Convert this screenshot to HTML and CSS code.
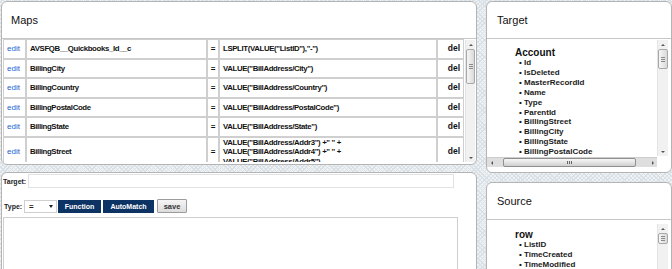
FILE: index.html
```html
<!DOCTYPE html>
<html lang="en">
<head>
    <meta charset="UTF-8">
    <meta name="viewport" content="width=device-width, initial-scale=1.0">
    <title>Field Maps</title>
    <link rel="stylesheet" href="styles.css">
</head>
<body>
    <div class="page">
        <div class="col-left">
            <section class="panel maps">
                <div class="panel-head">Maps</div>
                <div class="maps-body">
                    <div class="maps-scroll">
                        <table class="map-table">
                            <colgroup>
                                <col class="c-edit"><col class="c-field"><col class="c-eq"><col class="c-value"><col class="c-del">
                            </colgroup>
                            <tr>
                                <td class="edit">edit</td>
                                <td>AVSFQB__Quickbooks_Id__c</td>
                                <td class="eq">=</td>
                                <td class="value">LSPLIT(VALUE("ListID"),"-")</td>
                                <td class="del">del</td>
                            </tr>
                            <tr>
                                <td class="edit">edit</td>
                                <td>BillingCity</td>
                                <td class="eq">=</td>
                                <td class="value">VALUE("BillAddress/City")</td>
                                <td class="del">del</td>
                            </tr>
                            <tr>
                                <td class="edit">edit</td>
                                <td>BillingCountry</td>
                                <td class="eq">=</td>
                                <td class="value">VALUE("BillAddress/Country")</td>
                                <td class="del">del</td>
                            </tr>
                            <tr>
                                <td class="edit">edit</td>
                                <td>BillingPostalCode</td>
                                <td class="eq">=</td>
                                <td class="value">VALUE("BillAddress/PostalCode")</td>
                                <td class="del">del</td>
                            </tr>
                            <tr>
                                <td class="edit">edit</td>
                                <td>BillingState</td>
                                <td class="eq">=</td>
                                <td class="value">VALUE("BillAddress/State")</td>
                                <td class="del">del</td>
                            </tr>
                            <tr>
                                <td class="edit">edit</td>
                                <td>BillingStreet</td>
                                <td class="eq">=</td>
                                <td class="value">VALUE("BillAddress/Addr3") +" " +<br>VALUE("BillAddress/Addr4") +" " +<br>VALUE("BillAddress/Addr5")</td>
                                <td class="del">del</td>
                            </tr>
                        </table>
                    </div>
                    <div class="vscroll maps-sb">
                        <span class="sb-btn up"></span>
                        <span class="sb-track"><span class="thumb"><span class="grip"></span></span></span>
                        <span class="sb-btn down"></span>
                    </div>
                </div>
            </section>

            <section class="panel editor">
                <div class="field-row">
                    <label class="lbl target-lbl">Target:</label>
                    <input class="target-input" type="text">
                </div>
                <div class="type-row">
                    <label class="lbl type-lbl">Type:</label>
                    <span class="select-box"><span>=</span><span class="caret"></span></span>
                    <button class="btn-dark btn-function">Function</button>
                    <button class="btn-dark btn-automatch">AutoMatch</button>
                    <button class="btn-save">save</button>
                </div>
                <div class="formula-box"></div>
            </section>
        </div>

        <div class="col-right">
            <section class="panel target">
                <div class="panel-head">Target</div>
                <div class="tree-grid">
                    <div class="tree-content">
                        <div class="tree-title">Account</div>
                        <ul class="tree-list">
                            <li>Id</li>
                            <li>IsDeleted</li>
                            <li>MasterRecordId</li>
                            <li>Name</li>
                            <li>Type</li>
                            <li>ParentId</li>
                            <li>BillingStreet</li>
                            <li>BillingCity</li>
                            <li>BillingState</li>
                            <li>BillingPostalCode</li>
                        </ul>
                    </div>
                    <div class="vscroll target-sb">
                        <span class="sb-btn up"></span>
                        <span class="sb-track"><span class="thumb"><span class="grip"></span></span></span>
                        <span class="sb-btn down"></span>
                    </div>
                    <div class="hscroll">
                        <span class="sb-btn left"></span>
                        <span class="hs-track"><span class="hs-thumb"><span class="hs-grip"></span></span></span>
                        <span class="sb-btn right"></span>
                    </div>
                </div>
            </section>

            <section class="panel source">
                <div class="panel-head">Source</div>
                <div class="tree-grid source-grid">
                    <div class="tree-content">
                        <div class="tree-title">row</div>
                        <ul class="tree-list">
                            <li>ListID</li>
                            <li>TimeCreated</li>
                            <li>TimeModified</li>
                        </ul>
                    </div>
                    <div class="vscroll source-sb">
                        <span class="sb-btn up"></span>
                        <span class="sb-track"><span class="thumb"><span class="grip"></span></span></span>
                        <span class="sb-btn down"></span>
                    </div>
                </div>
            </section>
        </div>
    </div>
</body>
</html>
```

FILE: styles.css
```css
body {
    margin: 0;
    height: 269px;
    overflow: hidden;
    font-family: "Liberation Sans", Arial, sans-serif;
    color: #222;
    background-color: #eef2f4;
    background-image:
        repeating-linear-gradient(45deg, #d9e1e6 0 1px, transparent 1px 3px),
        repeating-linear-gradient(-45deg, #d9e1e6 0 1px, transparent 1px 3px);
}

.page {
    display: flex;
    align-items: flex-start;
    gap: 9px;
    padding: 1px 0 0 1px;
}

.col-left {
    width: 476px;
    display: flex;
    flex-direction: column;
    gap: 7px;
}

.col-right {
    width: 186px;
    display: flex;
    flex-direction: column;
    gap: 9px;
}

.panel {
    flex: none;
    background: #fff;
    border: 1px solid #b4b4b4;
    border-radius: 6px;
    box-sizing: border-box;
    overflow: hidden;
}

.panel-head {
    height: 36px;
    border-bottom: 1px solid #c6c6c6;
    display: flex;
    align-items: center;
    padding-left: 9px;
    font-size: 11px;
    color: #111;
}

.col-right .panel-head {
    padding-left: 10px;
}

/* Maps */
.maps {
    height: 164px;
}

.maps-body {
    display: flex;
    padding-left: 1px;
    height: 125px;
}

.maps-scroll {
    width: 461px;
    height: 123px;
    overflow: hidden;
}

.map-table {
    width: 461px;
    table-layout: fixed;
    border-collapse: separate;
    border-spacing: 0;
}

.c-edit { width: 23px; }
.c-field { width: 181px; }
.c-eq { width: 12px; }
.c-value { width: 218px; }
.c-del { width: 27px; }

.map-table tr {
    height: 19.6px;
}

.map-table td {
    border: 1px solid #cfcfcf;
    padding: 0 2px 0 3px;
    font-size: 7.8px;
    font-weight: bold;
    letter-spacing: -0.35px;
    line-height: 9.4px;
    vertical-align: middle;
    white-space: nowrap;
    overflow: hidden;
    color: #111;
}

.map-table td.edit {
    color: #1d62d4;
    font-weight: normal;
    font-size: 8px;
    letter-spacing: 0;
    padding-left: 3px;
}

.map-table td.eq {
    text-align: center;
    padding: 0;
    font-size: 8px;
    letter-spacing: 0;
}

.map-table td.del {
    text-align: right;
    padding-right: 3px;
    font-size: 8.5px;
    letter-spacing: 0;
}

/* fake scrollbars */
.vscroll {
    display: flex;
    flex-direction: column;
    background: #f1f1f1;
    border-left: 1px solid #e4e4e4;
    box-sizing: border-box;
}

.maps-sb {
    width: 10px;
    margin: 1px 0 0 1px;
    height: 122px;
}

.sb-btn {
    height: 9px;
    flex: none;
    display: flex;
    align-items: center;
    justify-content: center;
}

.sb-btn::before {
    content: "";
    border: 2px solid transparent;
}

.sb-btn.up::before { border-bottom: 2px solid #555; border-top: 0; }
.sb-btn.down::before { border-top: 2px solid #555; border-bottom: 0; }
.sb-btn.left::before { border-right: 2px solid #555; border-left: 0; }
.sb-btn.right::before { border-left: 2px solid #555; border-right: 0; }

.sb-track {
    flex: 1;
    display: flex;
    flex-direction: column;
}

.thumb {
    display: flex;
    align-items: center;
    justify-content: center;
    box-sizing: border-box;
    border: 1px solid #a8a8a8;
    border-radius: 2px;
    background: linear-gradient(to right, #f6f6f6, #dadada);
}

.grip {
    width: 4px;
    height: 5px;
    background: repeating-linear-gradient(#8a8a8a 0 1px, transparent 1px 2px);
}

.maps-sb .thumb {
    height: 35px;
}

/* editor */
.editor {
    height: 110px;
}

.field-row {
    display: flex;
    align-items: center;
    padding: 1px 0 0 1px;
}

.lbl {
    font-size: 7px;
    font-weight: bold;
    color: #222;
}

.target-lbl {
    width: 25px;
}

.target-input {
    width: 426px;
    height: 14px;
    box-sizing: border-box;
    border: 1px solid #e2e2e2;
    margin: 0;
    padding: 0;
}

.type-row {
    display: flex;
    align-items: center;
    margin-top: 11px;
    padding-left: 2px;
}

.type-lbl {
    width: 20px;
}

.select-box {
    width: 33px;
    height: 13px;
    box-sizing: border-box;
    border: 1px solid #cfcfcf;
    display: flex;
    align-items: center;
    justify-content: space-between;
    padding: 0 3px 0 4px;
    font-size: 8px;
    font-weight: bold;
    margin-right: 1px;
}

.caret {
    border: 2.5px solid transparent;
    border-top: 3px solid #222;
    border-bottom: 0;
}

.btn-dark {
    height: 13px;
    border: none;
    padding: 0;
    margin: 0 2px 0 0;
    background: #0d3264;
    color: #fff;
    font-family: "Liberation Sans", Arial, sans-serif;
    font-size: 7px;
    font-weight: bold;
}

.btn-function { width: 43px; }
.btn-automatch { width: 51px; margin-right: 3px; }

.btn-save {
    width: 30px;
    height: 14px;
    padding: 0;
    border: 1px solid #9c9c9c;
    border-radius: 1px;
    background: linear-gradient(#f5f5f5, #dcdcdc);
    color: #333;
    font-family: "Liberation Sans", Arial, sans-serif;
    font-size: 7.5px;
    font-weight: bold;
}

.formula-box {
    margin: 4px 0 0 1px;
    width: 453px;
    height: 70px;
    border: 1px solid #cfcfcf;
}

/* trees */
.target {
    height: 172px;
}

.source {
    height: 100px;
}

.tree-grid {
    display: grid;
    grid-template-columns: 170px 11px;
    grid-template-rows: 116px 10px;
    row-gap: 1px;
    padding-top: 1px;
}

.tree-content {
    overflow: hidden;
    padding: 7px 0 0 28px;
}

.tree-title {
    font-size: 10px;
    font-weight: bold;
    line-height: 11px;
    color: #111;
}

.tree-list {
    margin: 0;
    padding-left: 4px;
    list-style: none;
    font-size: 8px;
    font-weight: bold;
    line-height: 9.9px;
    color: #1a1a1a;
}

.tree-list li::before {
    content: "\2022";
    display: inline-block;
    width: 5px;
}

.target-sb .thumb {
    height: 20px;
}

.hscroll {
    grid-column: 1 / span 2;
    grid-row: 2;
    width: 170px;
    height: 10px;
    display: flex;
    background: #dedede;
    border-top: 1px solid #cdcdcd;
    box-sizing: border-box;
}

.hscroll .sb-btn {
    width: 9px;
    height: 9px;
}

.hs-track {
    flex: 1;
    display: flex;
    padding: 0 12px 0 7px;
}

.hs-thumb {
    flex: 1;
    display: flex;
    align-items: center;
    justify-content: center;
    border: 1px solid #8f8f8f;
    border-radius: 2px;
    background: linear-gradient(#f7f7f7, #cfcfcf);
}

.hs-grip {
    width: 5px;
    height: 3px;
    background: repeating-linear-gradient(to right, #666 0 1px, transparent 1px 2px);
}

.source-grid {
    grid-template-rows: 70px;
}

.source-grid .tree-content {
    padding-top: 8px;
}

.source-sb {
    margin-top: 3px;
    height: 60px;
}

.source-sb .thumb {
    height: 11px;
}
```
